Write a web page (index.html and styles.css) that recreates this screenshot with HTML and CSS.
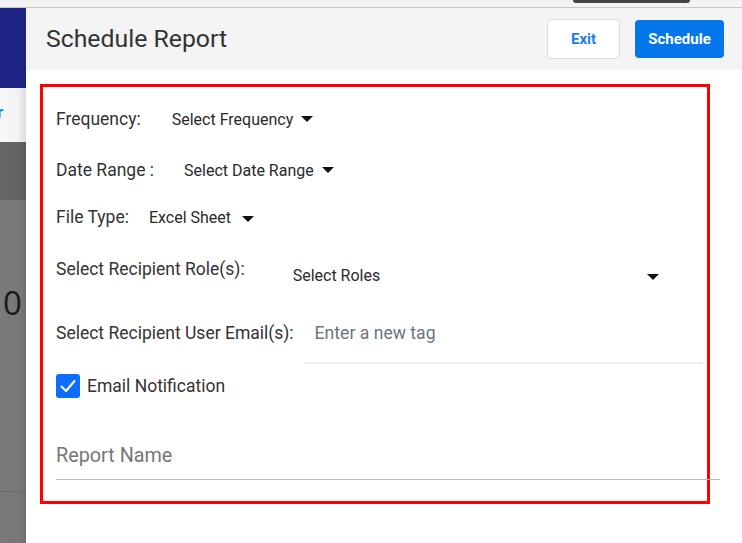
FILE: index.html
```html
<!DOCTYPE html>
<html>
<head>
<meta charset="utf-8">
<link rel="stylesheet" href="styles.css">
</head>
<body>
<div class="topbar"><div class="topbar-pill"></div></div>
<div class="main">
  <aside class="backdrop">
    <div class="bd-nav"></div>
    <div class="bd-light"><span class="bd-r">r</span></div>
    <div class="bd-gray-dark"></div>
    <div class="bd-gray">
      <div class="bd-zero">0</div>
      <div class="bd-line bd-line1"></div>
      <div class="bd-line bd-line2"></div>
    </div>
  </aside>
  <section class="modal">
    <header class="modal-header">
      <h1 class="modal-title">Schedule Report</h1>
      <div class="actions">
        <button class="btn btn-exit">Exit</button>
        <button class="btn btn-schedule">Schedule</button>
      </div>
    </header>
    <div class="modal-body">
      <div class="form-box">
        <div class="row row-freq">
          <span class="label">Frequency:</span>
          <span class="select sel-freq">Select Frequency<span class="caret"></span></span>
        </div>
        <div class="row row-date">
          <span class="label">Date Range :</span>
          <span class="select sel-date">Select Date Range<span class="caret"></span></span>
        </div>
        <div class="row row-file">
          <span class="label">File Type:</span>
          <span class="select sel-file">Excel Sheet<span class="caret caret-file"></span></span>
        </div>
        <div class="row row-roles">
          <span class="label">Select Recipient Role(s):</span>
          <span class="select sel-roles"><span>Select Roles</span><span class="caret"></span></span>
        </div>
        <div class="row row-email">
          <span class="label">Select Recipient User Email(s):</span>
          <span class="tag-input">Enter a new tag</span>
        </div>
        <div class="row row-check">
          <span class="checkbox">
            <svg viewBox="0 0 24 24" width="24" height="24"><path d="M5.5 12.5l4.5 4.5 8.5-10" fill="none" stroke="#fff" stroke-width="2" stroke-linecap="round" stroke-linejoin="round"/></svg>
          </span>
          <span class="check-label">Email Notification</span>
        </div>
        <div class="report-name">Report Name</div>
      </div>
    </div>
  </section>
</div>
</body>
</html>
```
FILE: styles.css
```css
* { box-sizing: border-box; }
html, body { margin: 0; padding: 0; }
body {
  width: 742px;
  height: 543px;
  overflow: hidden;
  font-family: Roboto, "Liberation Sans", sans-serif;
  color: #333;
  background: #fff;
}
.topbar {
  height: 8px;
  background: #f3f3f3;
  border-bottom: 1px solid #c8c8c8;
  position: relative;
}
.topbar-pill {
  position: absolute;
  left: 573px;
  top: 0;
  width: 117px;
  height: 3px;
  background: #444;
  border-radius: 0 0 6px 6px;
}
.main {
  display: flex;
  height: 535px;
}
.backdrop {
  width: 26px;
  flex: none;
  display: flex;
  flex-direction: column;
  position: relative;
  overflow: hidden;
}
.bd-nav { height: 80px; background: #1d2383; }
.bd-light {
  height: 54px;
  background: linear-gradient(to right, #f7f7f7 0%, #f2f2f2 70%, #dcdcdc 100%);
  position: relative;
}
.bd-r {
  position: absolute;
  left: -3px;
  top: 14px;
  font-size: 17px;
  font-weight: 700;
  color: #0a84ff;
}
.bd-gray-dark { height: 58px; background: linear-gradient(to right, #666 0%, #636363 80%, #5a5a5a 100%); }
.bd-gray {
  flex: 1;
  background: linear-gradient(to right, #7a7a7a 0%, #777 80%, #6e6e6e 100%);
  position: relative;
}
.bd-zero {
  position: absolute;
  left: 3px;
  top: 86px;
  font-family: "Open Sans", sans-serif;
  font-size: 33px;
  color: #1a1a1a;
  line-height: 1;
}
.bd-line { position: absolute; left: 0; right: 0; height: 1px; background: #6a6a6a; }
.bd-line1 { top: 291px; }
.bd-line2 { top: 347px; }

.modal {
  flex: 1;
  display: flex;
  flex-direction: column;
  background: #fff;
}
.modal-header {
  height: 62px;
  background: #f4f4f4;
  display: flex;
  align-items: center;
  justify-content: space-between;
  padding: 0 18px 0 20px;
}
.modal-title {
  margin: 0 0 1px 0;
  font-size: 24.8px;
  font-weight: 400;
  color: #333;
}
.actions { display: flex; gap: 15px; align-items: center; }
.btn {
  font-family: Roboto, "Liberation Sans", sans-serif;
  font-size: 15px;
  font-weight: 700;
  border-radius: 4px;
  height: 40px;
  padding: 0;
  cursor: pointer;
}
.btn-exit {
  width: 73px;
  background: #fff;
  border: 1px solid #dcdcdc;
  color: #1a7fe8;
}
.btn-schedule {
  width: 89px;
  height: 38px;
  background: #0576ea;
  border: none;
  color: #fff;
}
.modal-body {
  padding: 14px 0 0 14px;
}
.form-box {
  width: 670px;
  height: 420px;
  border: 3px solid #ff0000;
  padding: 0 0 0 13px;
}
.row {
  display: flex;
  align-items: center;
  font-size: 17.5px;
  color: #333;
  height: 22px;
}
.label { white-space: nowrap; }
.select {
  display: flex;
  align-items: center;
  font-size: 16px;
  color: #2a2a2a;
}
.caret {
  display: inline-block;
  width: 0;
  height: 0;
  border-left: 6px solid transparent;
  border-right: 6px solid transparent;
  border-top: 6px solid #111;
  margin-left: 8px;
}
.row-freq { margin-top: 21px; }
.sel-freq { margin-left: 31px; }
.row-date { margin-top: 29px; }
.sel-date { margin-left: 30px; }
.row-file { margin-top: 25px; }
.sel-file { margin-left: 20px; }
.caret-file { margin-left: 11px; margin-top: 3px; }
.row-roles { margin-top: 31px; align-items: flex-start; }
.sel-roles {
  margin-left: 48px;
  margin-top: 7px;
  width: 366px;
  justify-content: space-between;
}
.sel-roles .caret { margin-top: 2px; }
.row-email { margin-top: 41px; height: 42px; align-items: flex-start; }
.row-email .label { margin-top: 1px; }
.tag-input {
  margin-left: 10px;
  width: 399px;
  height: 42px;
  border-bottom: 2px solid #eee;
  padding: 1px 0 0 11px;
  color: #6c757d;
  font-size: 17.6px;
}
.row-check { margin-top: 10px; height: 24px; }
.checkbox {
  width: 24px;
  height: 24px;
  background: #0d6efd;
  border-radius: 3px;
  display: flex;
  align-items: center;
  justify-content: center;
}
.checkbox svg { display: block; }
.check-label { margin-left: 7px; }
.report-name {
  margin-top: 34px;
  width: 664px;
  height: 48px;
  border-bottom: 1px solid #bbb;
  font-size: 19.8px;
  color: #777;
  padding-top: 12px;
}
```
